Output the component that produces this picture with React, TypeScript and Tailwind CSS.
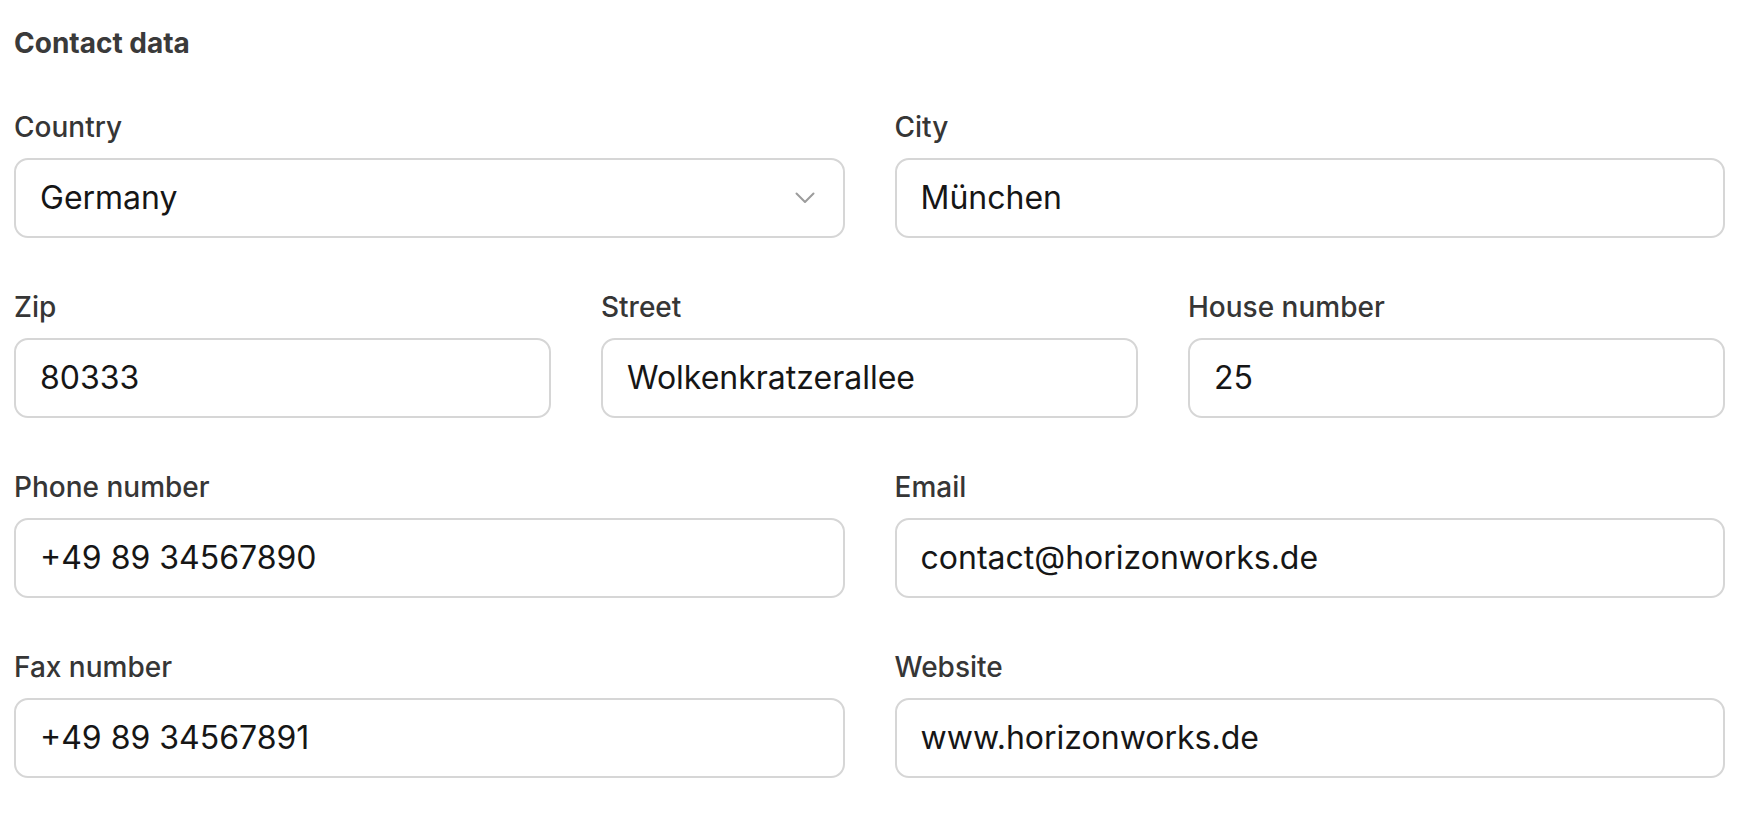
import React from "react";

const font = { fontFamily: "Inter, 'Noto Sans', sans-serif" };

function Field({ label, value, select }: { label: string; value: string; select?: boolean }) {
  return (
    <div className="flex flex-col gap-[11px] min-w-0">
      <label className="text-[28px] leading-[40px] font-medium text-[#363636]">{label}</label>
      <div className="h-[80px] border-2 border-[#d6d6d6] rounded-[14px] bg-white flex items-center pl-[24px] pr-[28px]">
        <input
          readOnly
          defaultValue={value}
          className="flex-1 min-w-0 bg-transparent outline-none text-[32px] text-[#161616]"
          style={font}
        />
        {select && (
          <svg width="20" height="12" viewBox="0 0 20 12" fill="none" className="shrink-0">
            <path d="M1.5 1.5 L10 10 L18.5 1.5" stroke="#9c9c9c" strokeWidth="2" strokeLinecap="round" strokeLinejoin="round" />
          </svg>
        )}
      </div>
    </div>
  );
}

export default function App() {
  return (
    <div className="min-h-screen bg-white" style={font}>
      <div className="w-[1725px] pl-[14px] pt-[23px]">
        <h2 className="text-[28px] leading-[40px] font-bold text-[#3a3a3a]">Contact data</h2>
        <div className="mt-[44px] flex flex-col gap-[49px]">
          <div className="grid grid-cols-2 gap-x-[50px]">
            <Field label="Country" value="Germany" select />
            <Field label="City" value="München" />
          </div>
          <div className="grid grid-cols-3 gap-x-[50px]">
            <Field label="Zip" value="80333" />
            <Field label="Street" value="Wolkenkratzerallee" />
            <Field label="House number" value="25" />
          </div>
          <div className="grid grid-cols-2 gap-x-[50px]">
            <Field label="Phone number" value="+49 89 34567890" />
            <Field label="Email" value="contact@horizonworks.de" />
          </div>
          <div className="grid grid-cols-2 gap-x-[50px]">
            <Field label="Fax number" value="+49 89 34567891" />
            <Field label="Website" value="www.horizonworks.de" />
          </div>
        </div>
      </div>
    </div>
  );
}
